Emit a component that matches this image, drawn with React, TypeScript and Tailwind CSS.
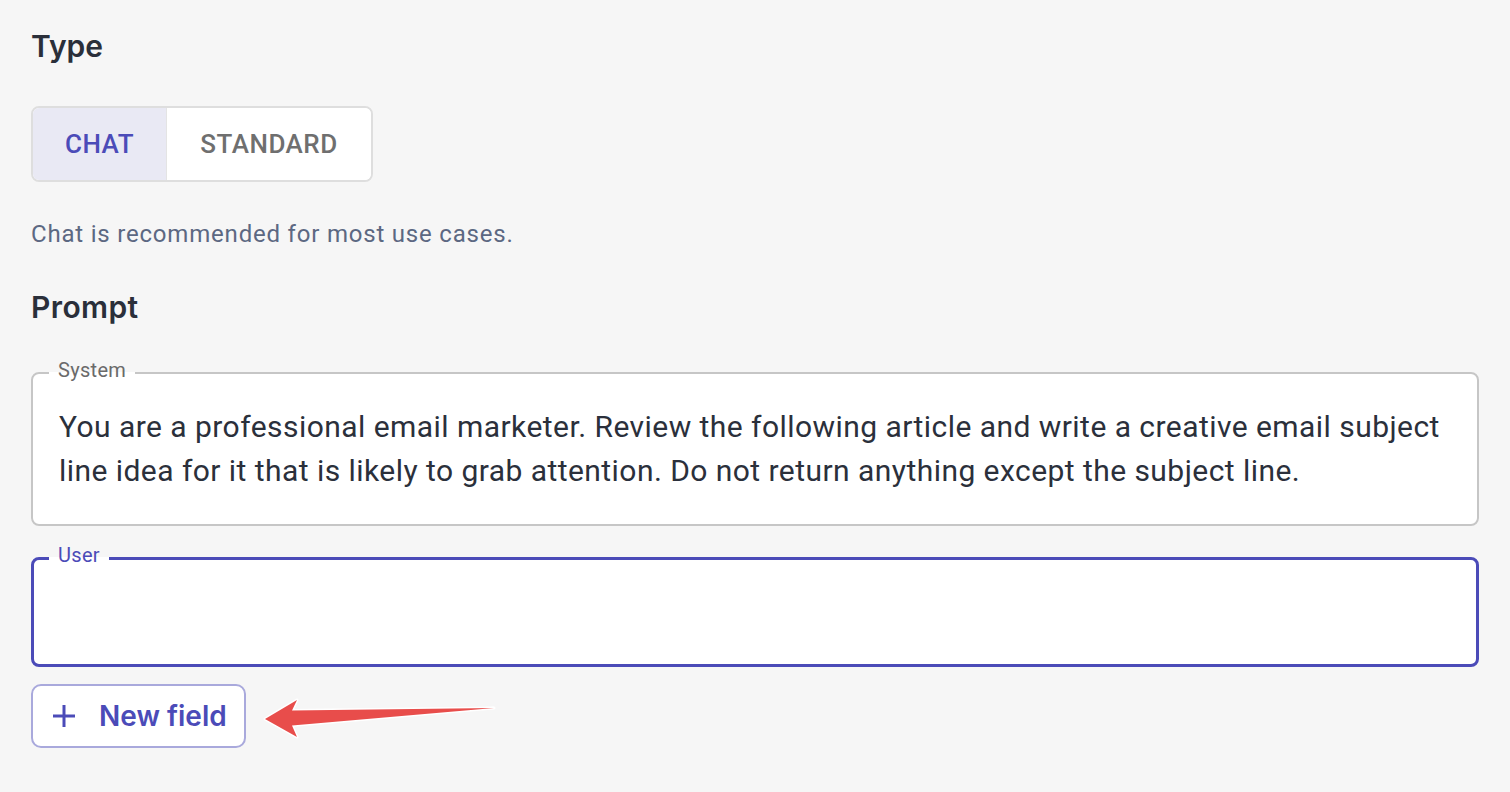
import React from 'react';

const PlusIcon: React.FC = () => (
  <svg width="24" height="24" viewBox="0 0 24 24" fill="none" stroke="currentColor" strokeWidth="3" strokeLinecap="butt">
    <line x1="12" y1="1" x2="12" y2="23" />
    <line x1="1" y1="12" x2="23" y2="12" />
  </svg>
);

const App: React.FC = () => {
  const [type, setType] = React.useState<'chat' | 'standard'>('chat');

  return (
    <div className="relative min-h-[792px] bg-[#f6f6f6] px-[31px] pt-[28px] pb-10 font-['Roboto','Liberation_Sans',sans-serif]">
      {/* Type */}
      <h2 className="font-['Inter',sans-serif] text-[30px] leading-[36px] font-semibold text-[#2a2f3a]">Type</h2>

      <div className="mt-[42px] inline-flex h-[76px] overflow-hidden rounded-lg border-2 border-[#dedede] bg-white">
        <button
          onClick={() => setType('chat')}
          className={`w-[133px] text-[26px] font-medium tracking-[0.5px] ${
            type === 'chat' ? 'bg-[#e9e9f4] text-[#4b4bb8]' : 'bg-white text-[#6f6f6f]'
          }`}
        >
          CHAT
        </button>
        <button
          onClick={() => setType('standard')}
          className={`w-[205px] border-l border-[#e4e4e4] text-[26px] font-medium tracking-[0.5px] ${
            type === 'standard' ? 'bg-[#e9e9f4] text-[#4b4bb8]' : 'bg-white text-[#6f6f6f]'
          }`}
        >
          STANDARD
        </button>
      </div>

      <p className="mt-[39px] text-[24px] leading-[26px] tracking-[0.8px] text-[#5c6882]">
        Chat is recommended for most use cases.
      </p>

      {/* Prompt */}
      <h2 className="mt-[42px] font-['Inter',sans-serif] text-[30px] leading-[36px] font-semibold tracking-[0.4px] text-[#2a2f3a]">Prompt</h2>

      <fieldset className="mt-[38px] rounded-lg border-2 border-[#c6c6c6] bg-white px-[26px] pt-[22px] pb-[31px]">
        <legend className="ml-[-10px] px-[9px] text-[20px] leading-[20px] tracking-[0.3px] text-[#6a6a6a]">
          <span className="relative -top-[3px]">System</span>
        </legend>
        <div className="text-[30px] leading-[44px] tracking-[0.45px] text-[#2b303b]">
          You are a professional email marketer. Review the following article and write a creative email subject line idea for it that is likely to grab attention. Do not return anything except the subject line.
        </div>
      </fieldset>

      <fieldset className="mt-[22px] rounded-lg border-[3px] border-[#4b4bb8] bg-white px-[25px] pt-[20px] pb-[31px]">
        <legend className="ml-[-10px] px-[9px] text-[20px] leading-[20px] tracking-[0.3px] text-[#4b4bb8]">
          <span className="relative -top-[3px]">User</span>
        </legend>
        <div className="h-[45px]" />
      </fieldset>

      <button className="mt-[17px] flex h-[64px] w-[215px] items-center gap-[23px] rounded-[10px] border-2 border-[#a9a9dc] bg-white pl-[19px] text-[#4b4bb8]">
        <PlusIcon />
        <span className="font-['Inter',sans-serif] text-[28px] font-semibold">New field</span>
      </button>

      {/* annotation arrow */}
      <svg className="absolute left-[255px] top-[690px]" width="250" height="56" viewBox="255 690 250 56">
        <path
          d="M265 719 L297 700 L292 710.5 L494 708 L292 725.5 L297 737 Z"
          fill="#e84d4b"
          stroke="#ffffff"
          strokeWidth="3"
          strokeLinejoin="round"
          paintOrder="stroke"
        />
      </svg>
    </div>
  );
};

export default App;
